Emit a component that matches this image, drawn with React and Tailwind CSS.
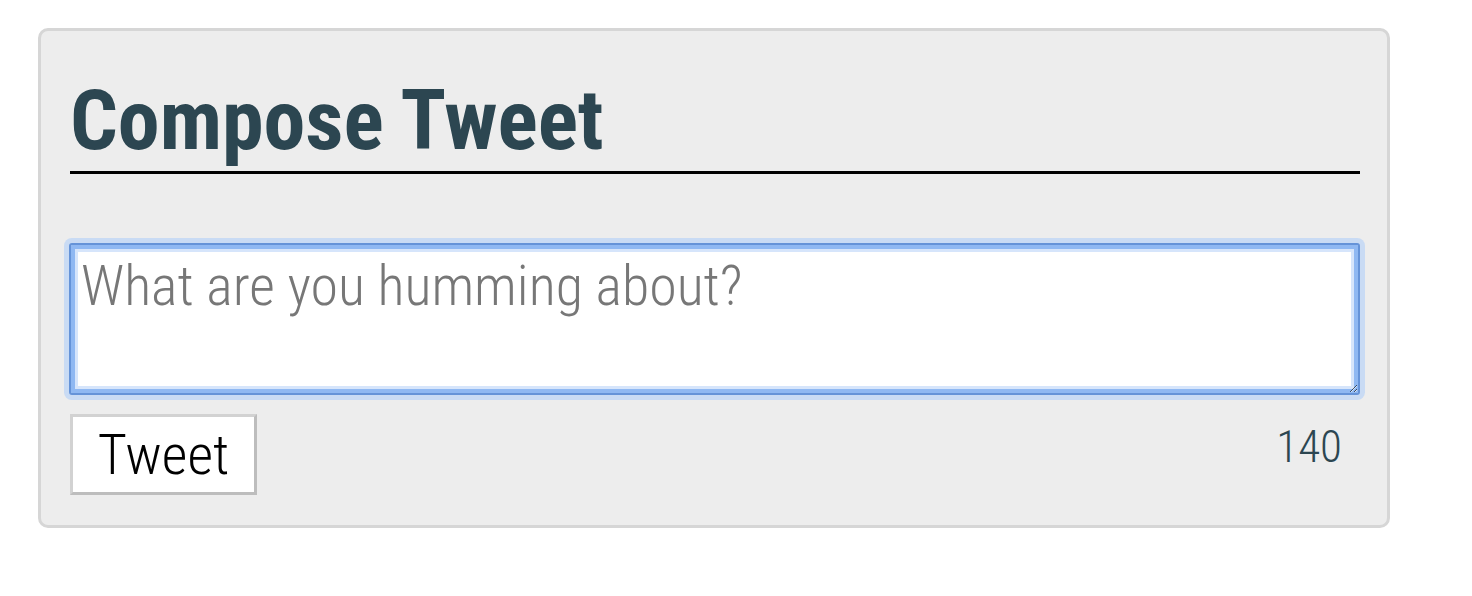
import React from "react";

const font = { fontFamily: '"Roboto Condensed", Roboto, "Liberation Sans", sans-serif' };

export default function App() {
  return (
    <div className="min-h-[596px] bg-white pt-[28px] pl-[38px]" style={font}>
      <div className="w-[1352px] h-[500px] rounded-[10px] border-[3px] border-[#d6d6d6] bg-[#ededed] pl-[29px] pr-[27px] pt-[48px]">
        <h1 className="border-b-[3px] border-black pb-[8px] text-[84px] font-bold leading-none text-[#2c4651]">
          Compose Tweet
        </h1>
        <textarea
          className="mt-[69px] block h-[152px] w-[1291px] -ml-px rounded-[3px] border-2 border-[#6593d8] bg-white pt-[8px] pl-[10px] text-[56px] font-light leading-[1.2] text-black outline-none placeholder:text-[#777] shadow-[0_0_0_5px_#c9dbf4,inset_0_0_0_4px_#8fb8f2,inset_0_0_0_7px_#d6e5fb]"
          placeholder="What are you humming about?"
          style={font}
        />
        <div className="mt-[19px] flex items-start justify-between">
          <button
            className="flex h-[81px] w-[187px] items-center justify-center border-[3px] border-t-[#d2d2d2] border-l-[#d2d2d2] border-r-[#bdbdbd] border-b-[#bdbdbd] bg-white text-[56px] font-light leading-none text-black"
            style={font}
          >
            Tweet
          </button>
          <span className="mt-[10px] pr-[18px] text-[45px] font-light leading-none text-[#2c4651]">140</span>
        </div>
      </div>
    </div>
  );
}
